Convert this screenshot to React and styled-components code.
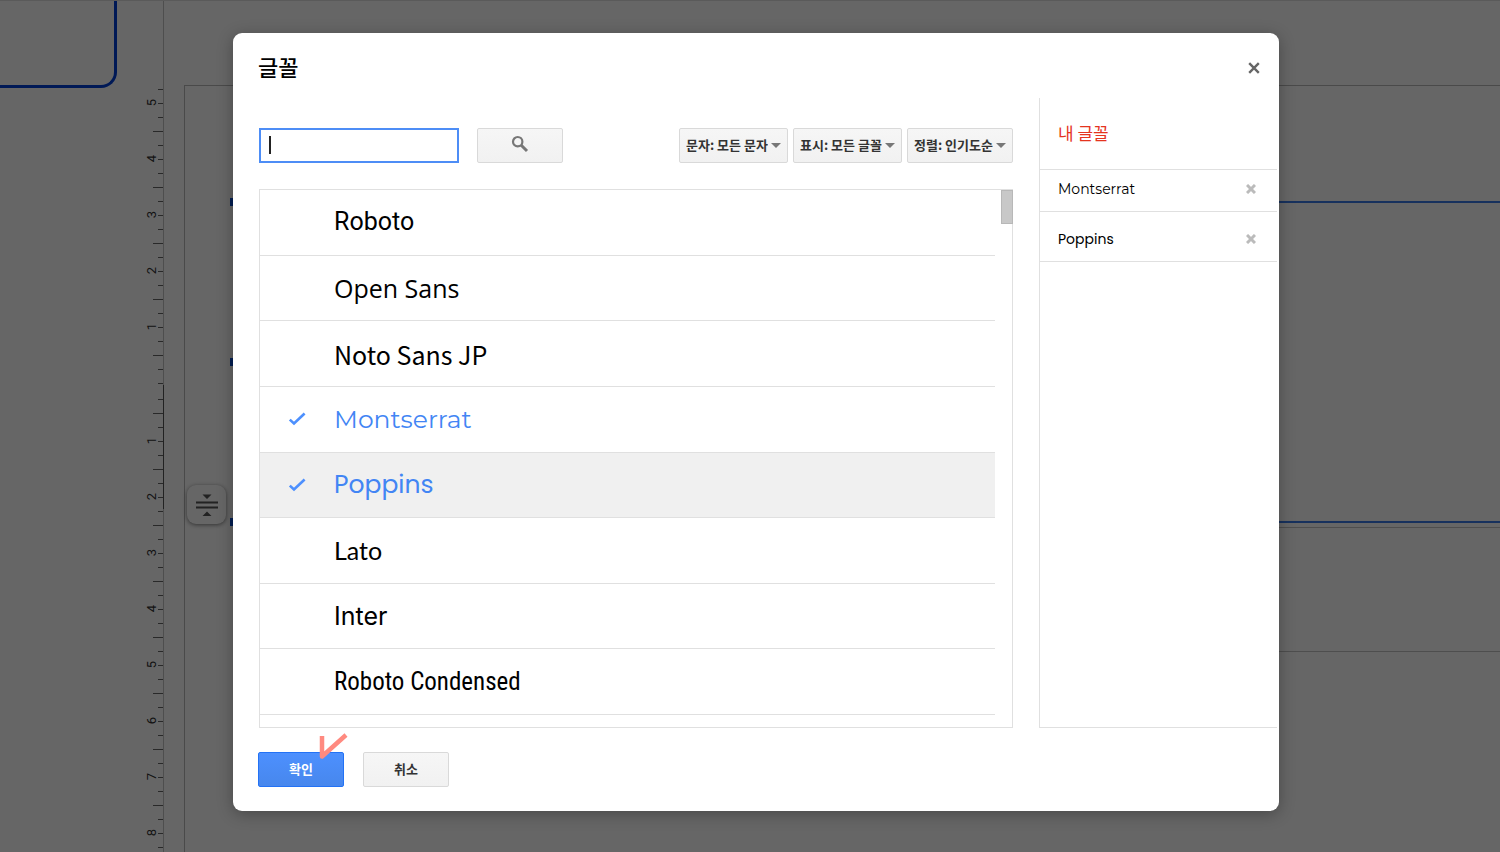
import React, { useState } from 'react';
import styled, { createGlobalStyle } from 'styled-components';

const KR = '"Noto Sans CJK KR", sans-serif';

const FONTS = [
  { name: 'Roboto', family: 'Roboto' },
  { name: 'Open Sans', family: '"Open Sans"' },
  { name: 'Noto Sans JP', family: '"Noto Sans CJK JP"' },
  { name: 'Montserrat', family: 'Montserrat, Inter', picked: true },
  { name: 'Poppins', family: 'Poppins, Inter', picked: true, hovered: true },
  { name: 'Lato', family: 'Lato' },
  { name: 'Inter', family: 'Inter' },
  {
    name: 'Roboto Condensed',
    family: '"Roboto Condensed", "Liberation Sans Narrow", Roboto',
  },
];

const MY_FONTS = [
  { name: 'Montserrat', family: 'Montserrat, Inter', height: 42 },
  { name: 'Poppins', family: 'Poppins, Inter', height: 50 },
];

const FILTERS = [
  { label: '문자', option: '문자: 모든 문자' },
  { label: '표시', option: '표시: 모든 글꼴' },
  { label: '정렬', option: '정렬: 인기도순' },
];

// four ticks per unit, counted from the zero point
const UPPER_TICKS = Array.from({ length: 22 }, (_, i) => 21 - i);
const LOWER_TICKS = Array.from({ length: 33 }, (_, i) => i + 1);

const Ticks = ({ steps }) =>
  steps.map((step) => (
    <TickRow key={step}>
      {step % 4 === 0 && step > 0 && <TickLabel>{step / 4}</TickLabel>}
      <Tick $long={step % 4 === 2} />
    </TickRow>
  ));

const Cross = ({ size, weight }) => (
  <svg width={size} height={size} viewBox="0 0 10 10" aria-hidden="true">
    <path
      d="M1 1L9 9M9 1L1 9"
      stroke="currentColor"
      strokeWidth={weight}
      fill="none"
    />
  </svg>
);

const CheckMark = () => (
  <svg width="18" height="14" viewBox="0 0 18 14" aria-hidden="true">
    <path
      d="M1.8 7.6L6 11.5L16.6 1.5"
      stroke="#4d90fe"
      strokeWidth="2.6"
      fill="none"
    />
  </svg>
);

const App = () => {
  const [keyword, setKeyword] = useState('');
  return (
    <>
      <GlobalStyle />
      <Screen>
        <Workspace aria-hidden="true">
          <Filmstrip>
            <Slide />
          </Filmstrip>
          <Ruler>
            <Ticks steps={UPPER_TICKS} />
            <ZeroPoint />
            <Ticks steps={LOWER_TICKS} />
            <ActiveRange />
          </Ruler>
          <Canvas>
            <Sheet>
              <Placeholder />
              <Selection>
                <Handle $top={-5} />
                <Handle $top={155} />
                <Handle $top={315} />
              </Selection>
              <FitButton>
                <svg width="24" height="24" viewBox="0 0 24 24">
                  <path d="M7.5 1.5H16.5L12 6ZM7.5 23H16.5L12 18.5Z" />
                  <path d="M1 8.5H23V10.5H1ZM1 13.5H23V15.5H1Z" />
                </svg>
              </FitButton>
            </Sheet>
          </Canvas>
        </Workspace>
        <Overlay>
          <Dialog role="dialog" aria-labelledby="dialog-title">
            <Header>
              <Title id="dialog-title">글꼴</Title>
              <CloseButton aria-label="닫기">
                <Cross size={12} weight={2} />
              </CloseButton>
            </Header>
            <Body>
              <Main>
                <Toolbar>
                  <SearchBox>
                    <SearchInput
                      aria-label="글꼴 검색"
                      value={keyword}
                      onChange={(e) => setKeyword(e.target.value)}
                    />
                    {!keyword && <Caret />}
                  </SearchBox>
                  <Button aria-label="검색">
                    <svg width="18" height="18" viewBox="0 0 18 18">
                      <circle
                        cx="6.7"
                        cy="6.7"
                        r="4.7"
                        stroke="#777"
                        strokeWidth="2.2"
                        fill="none"
                      />
                      <path d="M10 10L16 16" stroke="#777" strokeWidth="3" />
                    </svg>
                  </Button>
                  <Filters>
                    {FILTERS.map(({ label, option }) => (
                      <SelectBox key={label}>
                        <Select aria-label={label}>
                          <option>{option}</option>
                        </Select>
                        <Arrow />
                      </SelectBox>
                    ))}
                  </Filters>
                </Toolbar>
                <ListFrame>
                  <FontList>
                    {FONTS.map(({ name, family, picked, hovered }) => (
                      <FontItem key={name} $hovered={hovered}>
                        <FontButton
                          $family={family}
                          $picked={picked}
                          aria-pressed={!!picked}
                        >
                          <CheckSlot>{picked && <CheckMark />}</CheckSlot>
                          {name}
                        </FontButton>
                      </FontItem>
                    ))}
                  </FontList>
                  <ScrollThumb />
                </ListFrame>
              </Main>
              <Side>
                <SideTitle>내 글꼴</SideTitle>
                {MY_FONTS.map(({ name, family, height }) => (
                  <MyFont key={name} $family={family} $height={height}>
                    {name}
                    <RemoveButton aria-label={`${name} 삭제`}>
                      <Cross size={10} weight={3} />
                    </RemoveButton>
                  </MyFont>
                ))}
              </Side>
            </Body>
            <Footer>
              <ConfirmBox>
                <ConfirmButton>확인</ConfirmButton>
                <Pointer width="30" height="28" viewBox="0 0 30 28">
                  <path
                    d="M3 4V24.5L27 3"
                    stroke="#ff8a80"
                    strokeWidth="4.5"
                    strokeLinejoin="round"
                    fill="none"
                  />
                </Pointer>
              </ConfirmBox>
              <Button>취소</Button>
            </Footer>
          </Dialog>
        </Overlay>
      </Screen>
    </>
  );
};

const GlobalStyle = createGlobalStyle`
  * {
    box-sizing: border-box;
  }
  body {
    margin: 0;
    font-family: ${KR};
  }
  button, input, select {
    font-family: inherit;
    margin: 0;
  }
`;

const Screen = styled.div`
  display: grid;
  min-height: 100vh;
  overflow: hidden;
  background: #fff;
`;
const Workspace = styled.div`
  grid-area: 1 / 1;
  display: flex;
  height: 100vh;
  overflow: hidden;
  border-top: 1px solid #e2e2e2;
`;
const Filmstrip = styled.div`
  width: 145px;
`;
const Slide = styled.div`
  width: 117px;
  height: 87px;
  border: 3px solid #0040d8;
  border-top: 0;
  border-left: 0;
  border-bottom-right-radius: 16px;
`;
const Ruler = styled.div`
  position: relative;
  width: 19px;
  padding-top: 81px;
  border-right: 1px solid #c4c4c4;
`;
const TickRow = styled.div`
  display: flex;
  align-items: center;
  height: 14px;
`;
const TickLabel = styled.span`
  width: 13px;
  line-height: 13px;
  font-family: Roboto, sans-serif;
  font-size: 13px;
  text-align: center;
  color: #333;
  writing-mode: vertical-rl;
  transform: rotate(180deg);
`;
const Tick = styled.i`
  width: ${({ $long }) => ($long ? 10 : 5)}px;
  height: 1px;
  margin-left: auto;
  background: #666;
`;
const ZeroPoint = styled.div`
  height: 2px;
`;
const ActiveRange = styled.div`
  position: absolute;
  top: 384px;
  right: -1px;
  width: 1px;
  height: 124px;
  background: #555;
`;
const Canvas = styled.div`
  flex: 1;
  display: flex;
  padding: 84px 0 0 20px;
`;
const Sheet = styled.div`
  position: relative;
  flex: 1;
  border: 1px solid #b8b8b8;
  border-width: 1px 0 0 1px;
`;
const Placeholder = styled.div`
  position: absolute;
  top: 441px;
  left: 70px;
  right: 0;
  height: 125px;
  border: 1px solid #c4c4c4;
  border-width: 1px 0;
`;
const Selection = styled.div`
  position: absolute;
  top: 115px;
  left: 48px;
  right: 0;
  height: 322px;
  border: 2px solid #3a7be8;
  border-right: 0;
`;
const Handle = styled.i`
  position: absolute;
  top: ${({ $top }) => $top}px;
  left: -5px;
  width: 8px;
  height: 8px;
  background: #0b4fd0;
`;
const FitButton = styled.div`
  position: absolute;
  top: 399px;
  left: 2px;
  display: flex;
  align-items: center;
  justify-content: center;
  width: 39px;
  height: 39px;
  border-radius: 9px;
  background: #fff;
  box-shadow: 0 1px 4px rgba(0, 0, 0, 0.5);
  fill: #555;
`;

const Overlay = styled.div`
  position: relative;
  grid-area: 1 / 1;
  padding: 33px 221px 41px 233px;
  background: rgba(0, 0, 0, 0.6);
`;
const Dialog = styled.div`
  border-radius: 9px;
  background: #fff;
  box-shadow: 0 3px 16px rgba(0, 0, 0, 0.3);
`;
const Header = styled.div`
  display: flex;
  align-items: center;
  justify-content: space-between;
  height: 65px;
  padding: 4px 17px 0 25px;
`;
const Title = styled.h1`
  margin: 0;
  padding-bottom: 4px;
  font-size: 22px;
  font-weight: 500;
  line-height: 32px;
  color: #000;
`;
const IconButton = styled.button`
  display: flex;
  align-items: center;
  height: 20px;
  padding: 0 2px;
  border: 0;
  background: none;
`;
const CloseButton = styled(IconButton)`
  color: #666;
`;
const RemoveButton = styled(IconButton)`
  color: #bbb;
`;
const Body = styled.div`
  display: grid;
  grid-template-columns: 1fr 238px;
  gap: 26px;
  padding: 0 2px 0 26px;
`;
const Main = styled.div`
  display: flex;
  flex-direction: column;
  gap: 26px;
  padding-top: 30px;
`;
const Toolbar = styled.div`
  display: flex;
  gap: 18px;
`;
const SearchBox = styled.div`
  position: relative;
  display: flex;
`;
const SearchInput = styled.input`
  width: 200px;
  height: 35px;
  padding: 0 10px;
  border: 2px solid #4d8df6;
  outline: 0;
  font-size: 16px;
`;
const Caret = styled.i`
  position: absolute;
  top: 8px;
  left: 10px;
  width: 2px;
  height: 18px;
  background: #222;
  pointer-events: none;
`;
const Button = styled.button`
  display: flex;
  align-items: center;
  justify-content: center;
  width: 86px;
  height: 35px;
  padding: 0 0 3px;
  border: 1px solid #d9d9d9;
  border-radius: 2px;
  background: linear-gradient(#f6f6f6, #f1f1f1);
  font-size: 13px;
  font-weight: 700;
  color: #333;
`;
const ConfirmButton = styled(Button)`
  border-color: #2372f5;
  background: linear-gradient(#4d90fe, #4787ed);
  color: #fff;
`;
const Filters = styled.div`
  display: flex;
  gap: 5px;
  margin-left: auto;
`;
const SelectBox = styled.div`
  position: relative;
  display: flex;
`;
const Select = styled.select`
  appearance: none;
  height: 35px;
  padding: 0 19px 3px 6px;
  border: 1px solid #d9d9d9;
  border-radius: 2px;
  background: linear-gradient(#f6f6f6, #f1f1f1);
  font-size: 13px;
  font-weight: 700;
  color: #333;
`;
const Arrow = styled.i`
  position: absolute;
  top: 15px;
  right: 7px;
  border: 5px solid transparent;
  border-top-color: #777;
  border-bottom: 0;
  pointer-events: none;
`;
const ListFrame = styled.div`
  position: relative;
  height: 539px;
  border: 1px solid #e0e0e0;
`;
const FontList = styled.ul`
  display: grid;
  grid-auto-rows: 1fr;
  height: 525px;
  margin: 0;
  padding: 0 17px 0 0;
  list-style: none;
`;
const FontItem = styled.li`
  display: flex;
  border-bottom: 1px solid #e0e0e0;
  background: ${({ $hovered }) => ($hovered ? '#f0f0f0' : 'none')};
`;
const FontButton = styled.button`
  flex: 1;
  display: flex;
  align-items: center;
  padding: 0;
  border: 0;
  background: none;
  font-family: ${({ $family }) => $family}, sans-serif;
  font-size: 25px;
  line-height: 40px;
  color: ${({ $picked }) => ($picked ? '#4285f4' : '#000')};
`;
const CheckSlot = styled.span`
  display: flex;
  width: 74px;
  padding-left: 28px;
`;
const ScrollThumb = styled.div`
  position: absolute;
  top: 0;
  right: -1px;
  width: 12px;
  height: 34px;
  border: 1px solid #b8b8b8;
  background: #c8c8c8;
`;
const Side = styled.div`
  border: 1px solid #e0e0e0;
  border-width: 0 0 1px 1px;
`;
const SideTitle = styled.h2`
  display: flex;
  align-items: center;
  height: 72px;
  margin: 0;
  padding: 0 18px 3px;
  border-bottom: 1px solid #e0e0e0;
  font-size: 17px;
  font-weight: 400;
  color: #e5341f;
`;
const MyFont = styled.div`
  display: flex;
  align-items: flex-end;
  justify-content: space-between;
  height: ${({ $height }) => $height}px;
  padding: 0 19px 12px 18px;
  border-bottom: 1px solid #e0e0e0;
  font-family: ${({ $family }) => $family}, sans-serif;
  font-size: 14px;
  line-height: 20px;
  color: #000;
`;
const Footer = styled.div`
  display: flex;
  gap: 19px;
  padding: 24px 25px;
`;
const ConfirmBox = styled.div`
  position: relative;
`;
const Pointer = styled.svg`
  position: absolute;
  top: -20px;
  right: -5px;
  pointer-events: none;
`;

export default App;
